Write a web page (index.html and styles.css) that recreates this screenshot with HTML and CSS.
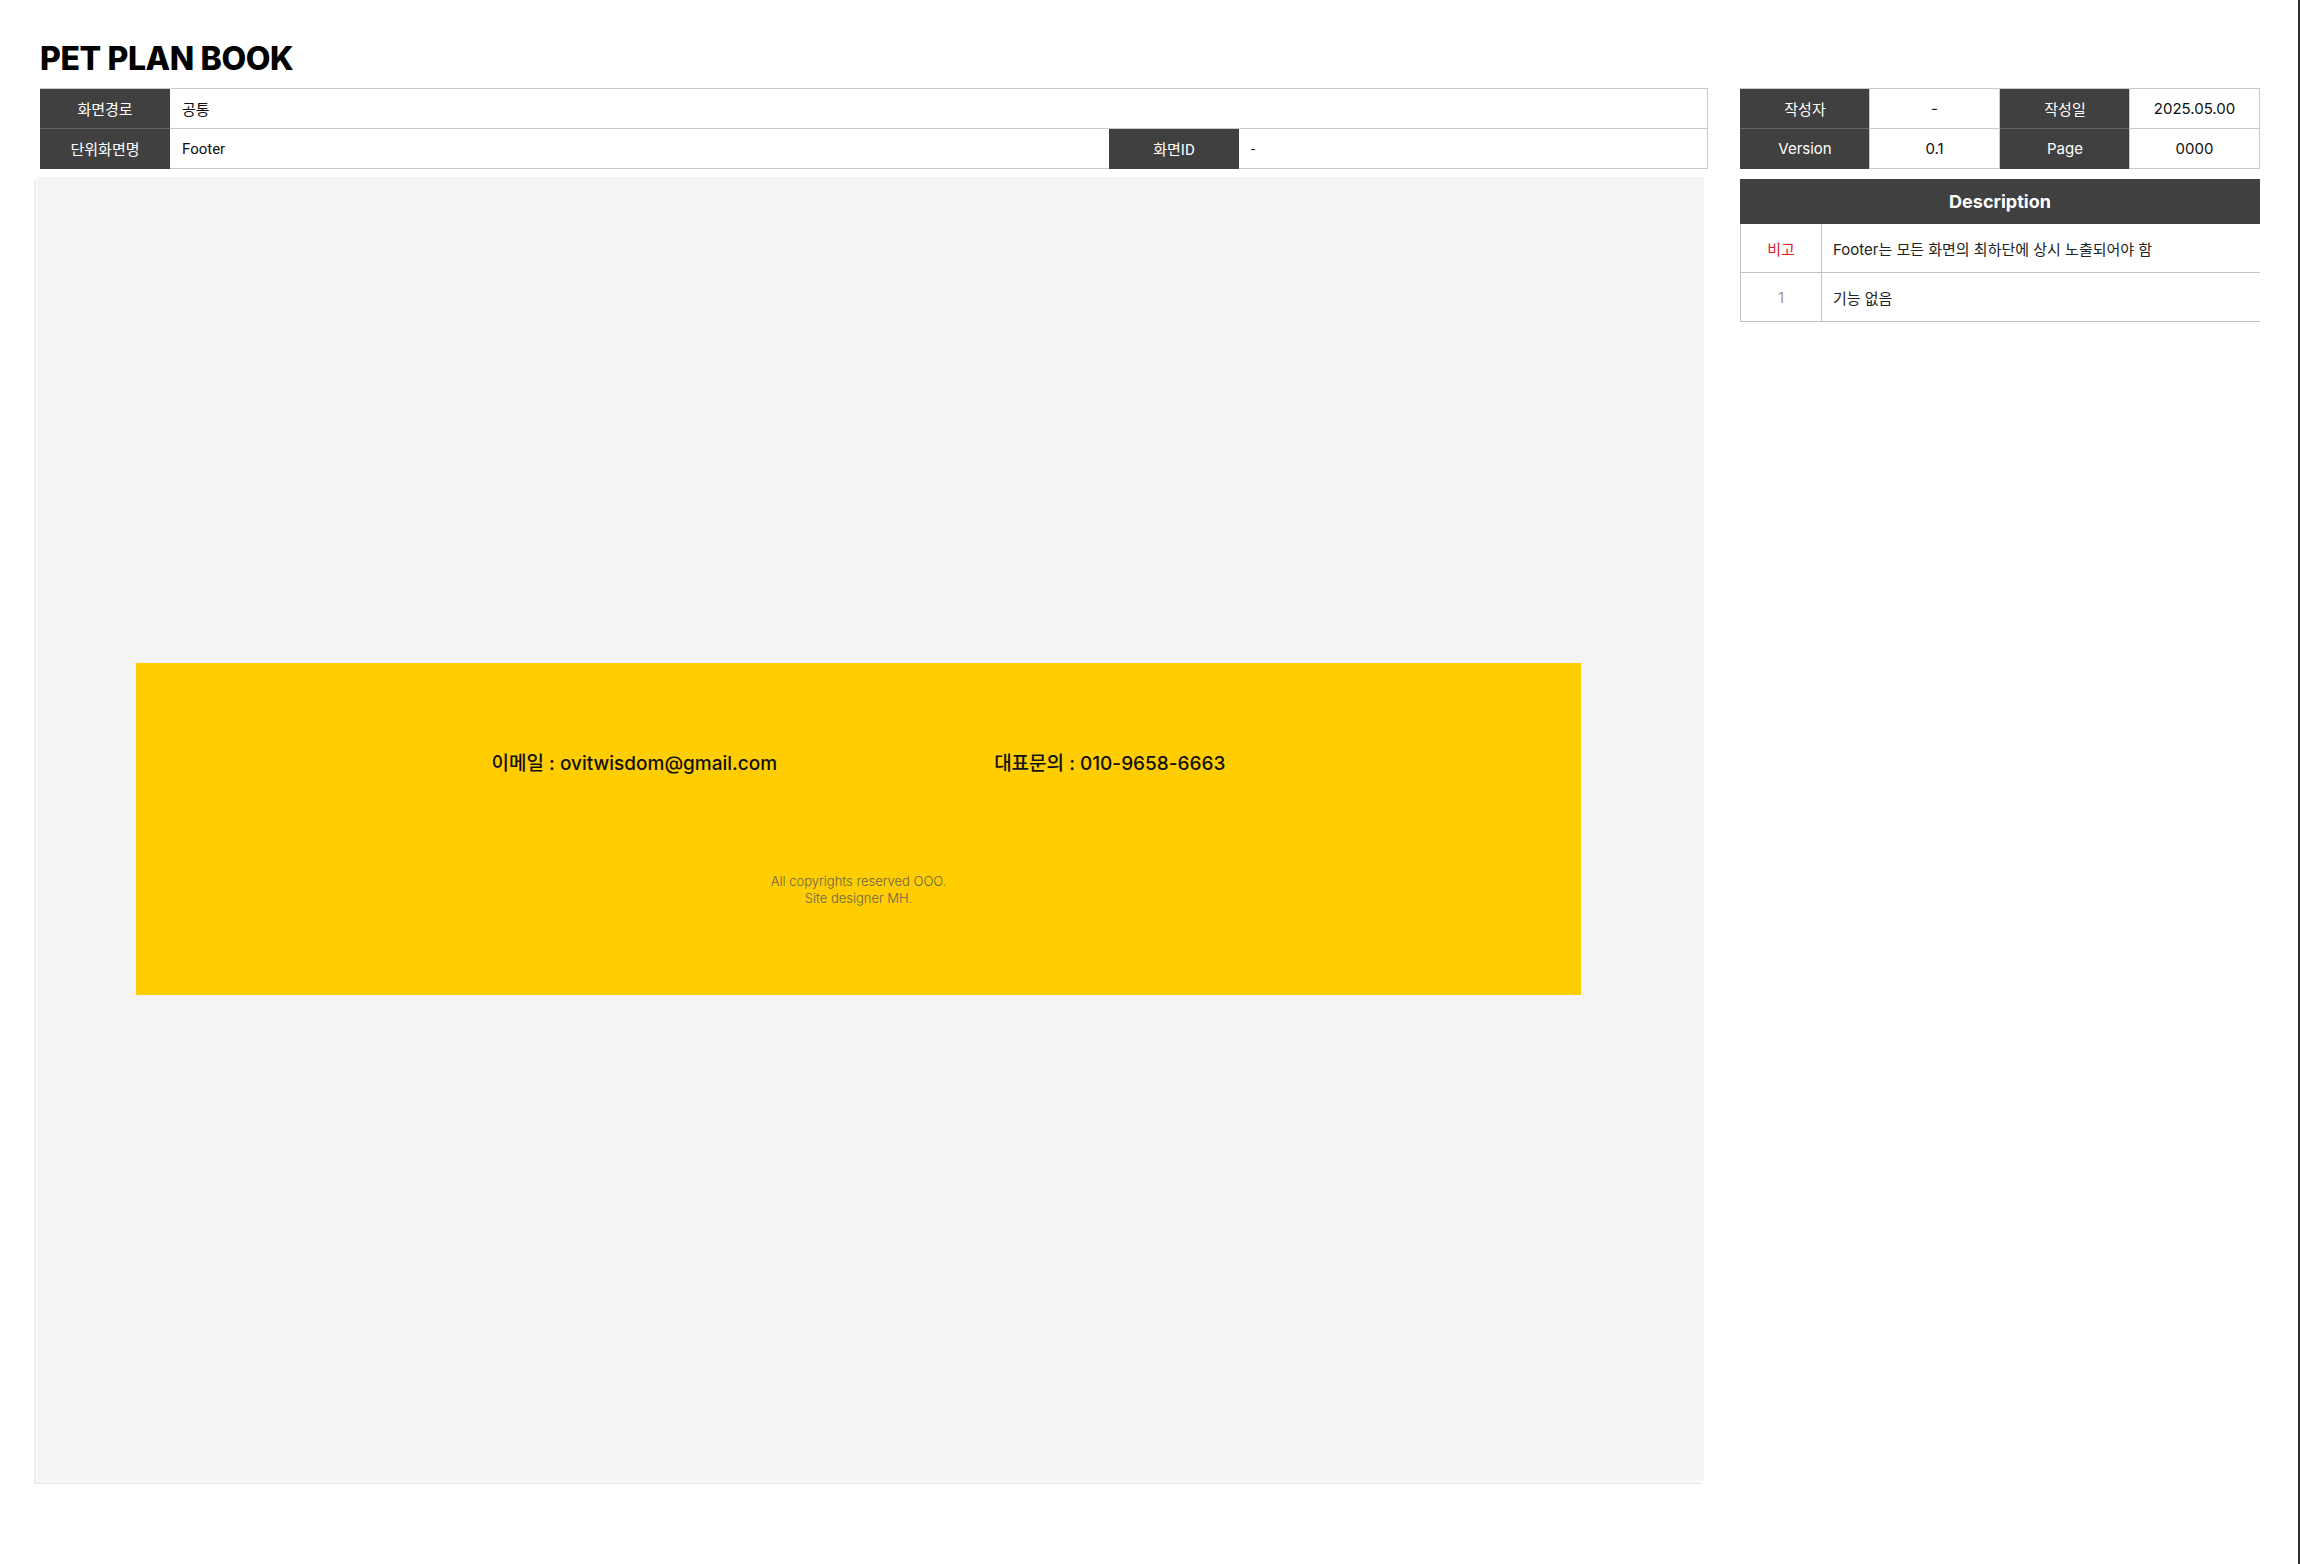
FILE: index.html
```html
<!DOCTYPE html>
<html lang="ko">
<head>
<meta charset="utf-8">
<title>PET PLAN BOOK</title>
<link rel="stylesheet" href="styles.css">
</head>
<body>
<div class="page">
  <h1 class="title">PET PLAN BOOK</h1>
  <div class="layout">
    <div class="left">
      <div class="info-grid">
        <div class="cell head">화면경로</div>
        <div class="cell val span3">공통</div>
        <div class="cell head last">단위화면명</div>
        <div class="cell val">Footer</div>
        <div class="cell head last">화면ID</div>
        <div class="cell val">-</div>
      </div>
      <div class="canvas">
        <div class="footer-box">
          <div class="contacts">
            <span>이메일 : ovitwisdom@gmail.com</span>
            <span>대표문의 : 010-9658-6663</span>
          </div>
          <p class="copy">All copyrights reserved OOO.<br>Site designer MH.</p>
        </div>
      </div>
    </div>
    <div class="right">
      <div class="meta-grid">
        <div class="mcell mhead">작성자</div>
        <div class="mcell mval">-</div>
        <div class="mcell mhead">작성일</div>
        <div class="mcell mval">2025.05.00</div>
        <div class="mcell mhead last">Version</div>
        <div class="mcell mval">0.1</div>
        <div class="mcell mhead last">Page</div>
        <div class="mcell mval">0000</div>
      </div>
      <div class="desc">
        <div class="desc-head">Description</div>
        <div class="desc-row">
          <div class="desc-no note">비고</div>
          <div class="desc-text">Footer는 모든 화면의 최하단에 상시 노출되어야 함</div>
        </div>
        <div class="desc-row">
          <div class="desc-no">1</div>
          <div class="desc-text">기능 없음</div>
        </div>
      </div>
    </div>
  </div>
</div>
<div class="edge"></div>
</body>
</html>
```

FILE: styles.css
```css
html, body {
  margin: 0;
  padding: 0;
  background: #ffffff;
}

body {
  display: flex;
  min-height: 1564px;
  font-family: "Inter", "Noto Sans CJK KR", sans-serif;
  color: #111;
}

.page {
  flex: 1;
  padding: 39px 38px 0 40px;
}

.edge {
  width: 2px;
  background: #2e2e2e;
}

.title {
  margin: 0 0 9px;
  font-family: "Inter", sans-serif;
  font-weight: 800;
  font-size: 32px;
  line-height: 40px;
  letter-spacing: -0.4px;
  color: #000;
}

.layout {
  display: flex;
  gap: 32px;
  align-items: flex-start;
}

.left {
  width: 1668px;
}

.right {
  width: 520px;
}

/* left info table */
.info-grid {
  display: grid;
  grid-template-columns: 130px 939px 130px 1fr;
  border-top: 1px solid #c6cad2;
  border-right: 1px solid #c6cad2;
  font-family: "Roboto", "Noto Sans CJK KR", sans-serif;
  font-size: 15px;
}

.cell {
  height: 39px;
  display: flex;
  align-items: center;
  border-bottom: 1px solid #c6cad2;
}

.cell.head {
  justify-content: center;
  background: #404040;
  color: #fff;
  border-bottom-color: #666;
}

.cell.head.last {
  border-bottom-color: #404040;
}

.cell.val {
  padding-left: 12px;
  color: #111;
}

.cell.span3 {
  grid-column: span 3;
}

/* canvas */
.canvas {
  margin-top: 8px;
  margin-left: -3px;
  width: 1667px;
  height: 1304px;
  background: #f4f4f4;
  box-shadow: -1px 1px 0 0 #fff, -3px 3px 0 0 #ececec;
  display: flex;
  align-items: center;
}

.footer-box {
  margin-left: 99px;
  width: 1445px;
  height: 332px;
  box-sizing: border-box;
  padding-top: 89px;
  background: #ffcd00;
}

.contacts {
  display: flex;
  justify-content: center;
  gap: 217px;
  font-family: "Inter", "Noto Sans CJK KR", sans-serif;
  font-size: 19px;
  line-height: 24px;
  font-weight: 500;
  color: #111;
}

.copy {
  margin: 97px 0 0;
  text-align: center;
  font-family: "Inter", sans-serif;
  font-weight: 300;
  font-size: 13px;
  line-height: 17px;
  color: #6b6450;
}

/* right meta table */
.meta-grid {
  display: grid;
  grid-template-columns: repeat(4, 130px);
  border-top: 1px solid #c6cad2;
  font-size: 15px;
}

.mcell {
  height: 39px;
  display: flex;
  align-items: center;
  justify-content: center;
  border-bottom: 1px solid #c6cad2;
}

.mhead {
  background: #404040;
  color: #fff;
  border-bottom-color: #666;
  font-family: "Inter", "Noto Sans CJK KR", sans-serif;
}

.mhead.last {
  border-bottom-color: #404040;
}

.mval {
  color: #111;
  border-left: 1px solid #c6cad2;
  border-right: 1px solid #c6cad2;
  margin-left: -1px;
}

/* description */
.desc {
  margin-top: 10px;
}

.desc-head {
  height: 45px;
  display: flex;
  align-items: center;
  justify-content: center;
  background: #404040;
  color: #fff;
  font-weight: 700;
  font-size: 18px;
}

.desc-row {
  display: flex;
  border-left: 1px solid #c4c4c4;
  border-bottom: 1px solid #c4c4c4;
  height: 48px;
  font-size: 15px;
}

.desc-no {
  width: 80px;
  flex: none;
  display: flex;
  align-items: center;
  justify-content: center;
  border-right: 1px solid #c4c4c4;
  color: #999;
}

.desc-no.note {
  color: #e0201e;
}

.desc-text {
  display: flex;
  align-items: center;
  padding-left: 11px;
  color: #222;
}
```
